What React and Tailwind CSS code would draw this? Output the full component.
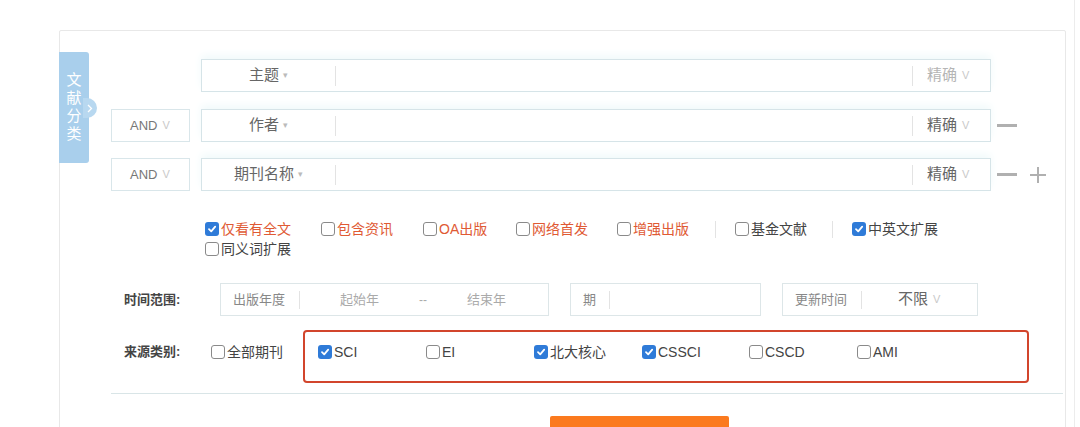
import React from 'react';

const font = { fontFamily: '"Liberation Sans", "Noto Sans CJK SC", sans-serif' };

const Box = ({ checked }) =>
    checked ? (
        <span className="w-[14px] h-[14px] rounded-[3px] bg-[#2f7bd8] flex items-center justify-center shrink-0">
            <svg width="10" height="10" viewBox="0 0 10 10">
                <path d="M2 5.2 L4.2 7.3 L8.2 2.6" stroke="white" strokeWidth="1.8" fill="none" strokeLinecap="round" strokeLinejoin="round" />
            </svg>
        </span>
    ) : (
        <span className="w-[14px] h-[14px] rounded-[3px] border border-[#8a8a8a] bg-white shrink-0" />
    );

const Check = ({ label, checked, red, w }) => (
    <div className={`flex items-center gap-[2px] shrink-0 ${w}`}>
        <Box checked={checked} />
        <span className={`text-[14px] leading-[20px] ${red ? 'text-[#e05a34]' : 'text-[#444]'}`}>{label}</span>
    </div>
);

const Vee = () => <span className="text-[11px] text-[#c9c9c9] ml-[5px] font-light">V</span>;

const Divider = ({ h = 'h-[20px]' }) => <span className={`w-px ${h} bg-[#e3e3e3] shrink-0`} />;

const FieldRow = ({ field, andBox, faint, minus, plus }) => (
    <div className="flex items-center h-[33px]">
        {andBox ? (
            <div className="w-[79px] h-[33px] border border-[#d9e6ea] flex items-center pl-[18px]">
                <span className="text-[13px] text-[#777]">AND</span>
                <Vee />
            </div>
        ) : (
            <div className="w-[79px]" />
        )}
        <div className="ml-[11px] w-[790px] h-[33px] border border-[#d6e4e8] bg-white flex items-center shadow-[0_-4px_8px_#f1fafb]">
            <div className="w-[133px] flex items-center justify-center">
                <span className="text-[15px] text-[#666]">{field}</span>
                <span className="text-[9px] text-[#bbb] ml-[4px]">▾</span>
            </div>
            <Divider />
            <div className="flex-1" />
            <Divider />
            <div className="w-[77px] flex items-center pl-[14px]">
                <span className={`text-[15px] ${faint ? 'text-[#b5b5b5]' : 'text-[#666]'}`}>精确</span>
                <Vee />
            </div>
        </div>
        {minus && <span className="ml-[6px] w-[20px] h-[3px] bg-[#b0b0b0]" />}
        {plus && (
            <span className="ml-[13px] w-[16px] h-[16px] relative">
                <span className="absolute left-0 top-[7px] w-[16px] h-[2px] bg-[#b0b0b0]" />
                <span className="absolute left-[7px] top-0 w-[2px] h-[16px] bg-[#b0b0b0]" />
            </span>
        )}
    </div>
);

export default function App() {
    return (
        <div className="w-[1080px] h-[427px] overflow-hidden bg-white flex" style={font}>
            <div className="ml-[59px] mt-[30px] w-[1007px] h-[460px] border border-[#e8e8e8] rounded-[2px] relative pt-[28px] pl-[51px]">
                {/* side tab */}
                <div className="absolute left-[-1px] top-[21px] w-[30px] h-[111px] bg-[#a9cfec] rounded-r-[3px] flex flex-col items-center pt-[19px]">
                    {['文', '献', '分', '类'].map((c) => (
                        <span key={c} className="text-white text-[15px] leading-[18px]">{c}</span>
                    ))}
                    <span className="absolute left-[24px] top-[46px] w-[14px] h-[20px] rounded-r-full bg-[#b8d8f0] flex items-center justify-center">
                        <svg width="6" height="9" viewBox="0 0 6 9">
                            <path d="M1 1 L4.5 4.5 L1 8" stroke="white" strokeWidth="1.3" fill="none" />
                        </svg>
                    </span>
                </div>

                <div className="flex flex-col gap-[16px]">
                    <FieldRow field="主题" faint />
                    <div className="mt-[1px]">
                        <FieldRow field="作者" andBox minus />
                    </div>
                    <FieldRow field="期刊名称" andBox minus plus />
                </div>

                {/* options */}
                <div className="mt-[28px] pl-[94px] flex flex-col">
                    <div className="flex items-center">
                        <Check label="仅看有全文" checked red w="w-[116px]" />
                        <Check label="包含资讯" red w="w-[102px]" />
                        <Check label="OA出版" red w="w-[93px]" />
                        <Check label="网络首发" red w="w-[101px]" />
                        <Check label="增强出版" red w="w-[98px]" />
                        <Divider h="h-[17px]" />
                        <div className="w-[19px]" />
                        <Check label="基金文献" w="w-[97px]" />
                        <Divider h="h-[17px]" />
                        <div className="w-[19px]" />
                        <Check label="中英文扩展" checked w="w-[110px]" />
                    </div>
                    <Check label="同义词扩展" w="w-[110px]" />
                </div>

                {/* time range */}
                <div className="mt-[24px] ml-[13px] flex items-center h-[33px]">
                    <span className="w-[96px] text-[13px] font-bold text-[#444]">时间范围:</span>
                    <div className="w-[329px] h-[33px] border border-[#dde6e8] flex items-center text-[13px]">
                        <span className="pl-[12px] w-[78px] text-[#888]">出版年度</span>
                        <Divider h="h-[18px]" />
                        <span className="ml-[40px] text-[#aaa]">起始年</span>
                        <span className="ml-[40px] text-[#aaa] text-[12px] leading-none">--</span>
                        <span className="ml-[40px] text-[#aaa]">结束年</span>
                    </div>
                    <div className="ml-[21px] w-[191px] h-[33px] border border-[#dde6e8] flex items-center text-[13px]">
                        <span className="pl-[12px] w-[38px] text-[#888]">期</span>
                        <Divider h="h-[18px]" />
                    </div>
                    <div className="ml-[21px] w-[196px] h-[33px] border border-[#dde6e8] flex items-center">
                        <span className="pl-[12px] w-[78px] text-[13px] text-[#888]">更新时间</span>
                        <Divider h="h-[18px]" />
                        <span className="ml-[36px] text-[15px] text-[#666]">不限</span>
                        <Vee />
                    </div>
                </div>

                {/* source */}
                <div className="mt-[14px] ml-[13px] flex items-start">
                    <span className="w-[87px] mt-[12px] text-[13px] font-bold text-[#444] leading-[20px]">来源类别:</span>
                    <div className="mt-[12px] w-[92px]">
                        <Check label="全部期刊" w="w-[92px]" />
                    </div>
                    <div className="w-[726px] h-[53px] border-2 border-[#d2452c] rounded-[4px] flex items-start pt-[10px] pl-[13px]">
                        <Check label="SCI" checked w="w-[108px]" />
                        <Check label="EI" w="w-[108px]" />
                        <Check label="北大核心" checked w="w-[108px]" />
                        <Check label="CSSCI" checked w="w-[107px]" />
                        <Check label="CSCD" w="w-[108px]" />
                        <Check label="AMI" w="w-[100px]" />
                    </div>
                </div>

                <div className="mt-[10px] w-[952px] h-px bg-[#d9e5e7]" />

                <div className="mt-[22px] flex items-start">
                    <span className="ml-[329px] mt-[10px] text-[13px] text-[#ccc]">重置条件</span>
                    <button className="ml-[58px] w-[179px] h-[40px] bg-[#fb7a1e] rounded-[2px] text-white text-[15px]">检 索</button>
                </div>
            </div>
            <div className="ml-[8px] w-px h-full bg-[#ececec]" />
        </div>
    );
}
